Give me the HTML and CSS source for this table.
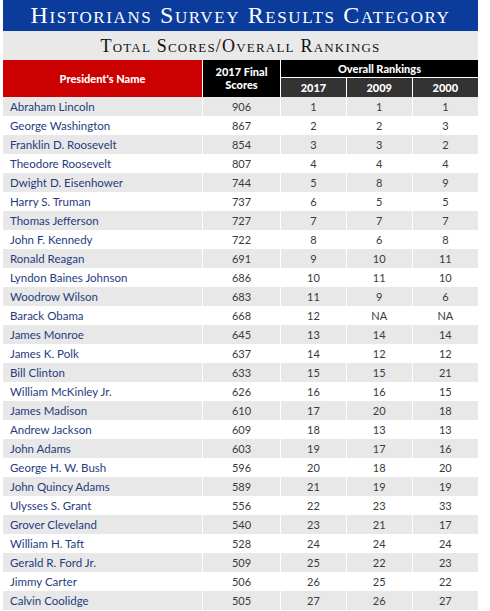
FILE: index.html
```html
<!DOCTYPE html>
<html>
<head>
<meta charset="utf-8">
<link rel="stylesheet" href="styles.css">
</head>
<body>
<div class="page">
  <h1 class="title">Historians Survey Results Category</h1>
  <h2 class="subtitle">Total Scores/Overall Rankings</h2>
  <table class="rank">
    <thead>
      <tr>
        <th class="h-name" rowspan="2">President's Name</th>
        <th class="h-score" rowspan="2"><span class="line">2017 Final</span><span class="line">Scores</span></th>
        <th class="h-overall" colspan="3">Overall Rankings</th>
      </tr>
      <tr>
        <th class="h-year">2017</th>
        <th class="h-year">2009</th>
        <th class="h-year last">2000</th>
      </tr>
    </thead>
    <tbody>
      <tr><td class="name">Abraham Lincoln</td><td>906</td><td>1</td><td>1</td><td>1</td></tr>
      <tr><td class="name">George Washington</td><td>867</td><td>2</td><td>2</td><td>3</td></tr>
      <tr><td class="name">Franklin D. Roosevelt</td><td>854</td><td>3</td><td>3</td><td>2</td></tr>
      <tr><td class="name">Theodore Roosevelt</td><td>807</td><td>4</td><td>4</td><td>4</td></tr>
      <tr><td class="name">Dwight D. Eisenhower</td><td>744</td><td>5</td><td>8</td><td>9</td></tr>
      <tr><td class="name">Harry S. Truman</td><td>737</td><td>6</td><td>5</td><td>5</td></tr>
      <tr><td class="name">Thomas Jefferson</td><td>727</td><td>7</td><td>7</td><td>7</td></tr>
      <tr><td class="name">John F. Kennedy</td><td>722</td><td>8</td><td>6</td><td>8</td></tr>
      <tr><td class="name">Ronald Reagan</td><td>691</td><td>9</td><td>10</td><td>11</td></tr>
      <tr><td class="name">Lyndon Baines Johnson</td><td>686</td><td>10</td><td>11</td><td>10</td></tr>
      <tr><td class="name">Woodrow Wilson</td><td>683</td><td>11</td><td>9</td><td>6</td></tr>
      <tr><td class="name">Barack Obama</td><td>668</td><td>12</td><td>NA</td><td>NA</td></tr>
      <tr><td class="name">James Monroe</td><td>645</td><td>13</td><td>14</td><td>14</td></tr>
      <tr><td class="name">James K. Polk</td><td>637</td><td>14</td><td>12</td><td>12</td></tr>
      <tr><td class="name">Bill Clinton</td><td>633</td><td>15</td><td>15</td><td>21</td></tr>
      <tr><td class="name">William McKinley Jr.</td><td>626</td><td>16</td><td>16</td><td>15</td></tr>
      <tr><td class="name">James Madison</td><td>610</td><td>17</td><td>20</td><td>18</td></tr>
      <tr><td class="name">Andrew Jackson</td><td>609</td><td>18</td><td>13</td><td>13</td></tr>
      <tr><td class="name">John Adams</td><td>603</td><td>19</td><td>17</td><td>16</td></tr>
      <tr><td class="name">George H. W. Bush</td><td>596</td><td>20</td><td>18</td><td>20</td></tr>
      <tr><td class="name">John Quincy Adams</td><td>589</td><td>21</td><td>19</td><td>19</td></tr>
      <tr><td class="name">Ulysses S. Grant</td><td>556</td><td>22</td><td>23</td><td>33</td></tr>
      <tr><td class="name">Grover Cleveland</td><td>540</td><td>23</td><td>21</td><td>17</td></tr>
      <tr><td class="name">William H. Taft</td><td>528</td><td>24</td><td>24</td><td>24</td></tr>
      <tr><td class="name">Gerald R. Ford Jr.</td><td>509</td><td>25</td><td>22</td><td>23</td></tr>
      <tr><td class="name">Jimmy Carter</td><td>506</td><td>26</td><td>25</td><td>22</td></tr>
      <tr><td class="name">Calvin Coolidge</td><td>505</td><td>27</td><td>26</td><td>27</td></tr>
    </tbody>
  </table>
</div>
</body>
</html>
```

FILE: styles.css
```css
html, body {
  margin: 0;
  padding: 0;
  background: #ffffff;
}
.page {
  width: 475px;
  margin-left: 3px;
}
.title {
  margin: 0;
  height: 31px;
  background: #0b3c9c;
  color: #ffffff;
  font-family: "Liberation Serif", serif;
  font-variant: small-caps;
  font-weight: normal;
  font-size: 24px;
  line-height: 30px;
  text-align: center;
  letter-spacing: 1.6px;
  white-space: nowrap;
}
.subtitle {
  margin: 0;
  height: 29px;
  background: #e9e9e9;
  color: #111111;
  font-family: "Liberation Serif", serif;
  font-variant: small-caps;
  font-weight: normal;
  font-size: 18px;
  line-height: 30px;
  text-align: center;
  letter-spacing: 1.2px;
  white-space: nowrap;
}
.rank {
  width: 475px;
  border-collapse: collapse;
  table-layout: fixed;
  font-family: Lato, "Open Sans", sans-serif;
}
.rank th {
  color: #ffffff;
  font-weight: 900;
  font-size: 11px;
  padding: 0;
  line-height: 12px;
}
.h-name {
  width: 199px;
  background: #cc0000;
  color: #ffd8e0;
  height: 37px;
  border-right: 1px solid #ffffff;
}
.h-score {
  width: 77px;
  background: #000000;
  border-right: 1px solid #ffffff;
  padding-bottom: 2px !important;
}
.h-score .line {
  display: block;
  line-height: 13px;
  height: 13px;
}
.h-overall {
  background: #000000;
  height: 17px;
  border-bottom: 1px solid #ffffff;
}
.h-year {
  background: #333333;
  height: 18px;
  border-right: 1px solid #ffffff;
}
.h-year.last {
  border-right: none;
}
.rank td {
  height: 19px;
  padding: 0;
  font-size: 11px;
  color: #3a3a3a;
  text-align: center;
  border-right: 1px solid #ffffff;
}
.rank td:last-child {
  border-right: none;
}
.rank tbody tr:nth-child(odd) td {
  background: #e8e8e8;
}
.rank td.name {
  text-align: left;
  padding-left: 7px;
  color: #1f3c7e;
  font-size: 11.5px;
}
```
